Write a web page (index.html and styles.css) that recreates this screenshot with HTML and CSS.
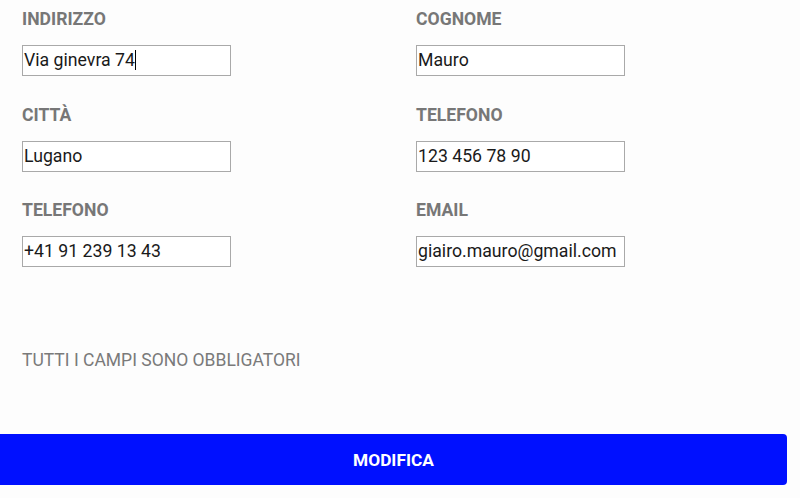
FILE: index.html
```html
<!DOCTYPE html>
<html lang="it">
<head>
<meta charset="utf-8">
<title>Modifica dati</title>
<link rel="stylesheet" href="styles.css">
</head>
<body>
<form class="form">
  <div class="grid">
    <div class="field">
      <label class="label">INDIRIZZO</label>
      <div class="input">Via ginevra 74<span class="caret"></span></div>
    </div>
    <div class="field">
      <label class="label">COGNOME</label>
      <div class="input">Mauro</div>
    </div>
    <div class="field">
      <label class="label">CITTÀ</label>
      <div class="input">Lugano</div>
    </div>
    <div class="field">
      <label class="label">TELEFONO</label>
      <div class="input">123 456 78 90</div>
    </div>
    <div class="field">
      <label class="label">TELEFONO</label>
      <div class="input">+41 91 239 13 43</div>
    </div>
    <div class="field">
      <label class="label">EMAIL</label>
      <div class="input">giairo.mauro@gmail.com</div>
    </div>
  </div>
  <p class="note">TUTTI I CAMPI SONO OBBLIGATORI</p>
  <button type="button" class="btn">MODIFICA</button>
</form>
</body>
</html>
```
FILE: styles.css
```css
html, body {
  margin: 0;
  padding: 0;
  background: #fdfdfd;
}
body {
  font-family: Roboto, "Liberation Sans", sans-serif;
  width: 800px;
  height: 498px;
  overflow: hidden;
}
.form {
  display: flex;
  flex-direction: column;
}
.grid {
  display: grid;
  grid-template-columns: 394px 394px;
  row-gap: 28.5px;
  padding: 9px 0 0 22px;
}
.field {
  display: flex;
  flex-direction: column;
}
.label {
  font-weight: 700;
  font-size: 17.6px;
  line-height: 20px;
  color: #777777;
  margin-bottom: 16px;
}
.input {
  box-sizing: border-box;
  width: 209px;
  height: 31px;
  border: 1px solid #a9a9a9;
  background: #ffffff;
  font-size: 17.7px;
  line-height: 29px;
  color: #1a1a1a;
  padding: 0 1px;
  white-space: nowrap;
  overflow: hidden;
}
.caret {
  display: inline-block;
  width: 1px;
  height: 20px;
  background: #000;
  vertical-align: -4px;
}
.note {
  margin: 83px 0 0 22px;
  font-size: 17.5px;
  line-height: 20px;
  color: #7a7a7a;
}
.btn {
  margin-top: 64px;
  width: 787px;
  height: 51px;
  border: none;
  border-radius: 0 4px 4px 0;
  background: #0010ff;
  color: #ffffff;
  font-family: Roboto, "Liberation Sans", sans-serif;
  font-weight: 700;
  font-size: 17.3px;
  padding: 0;
}
```
